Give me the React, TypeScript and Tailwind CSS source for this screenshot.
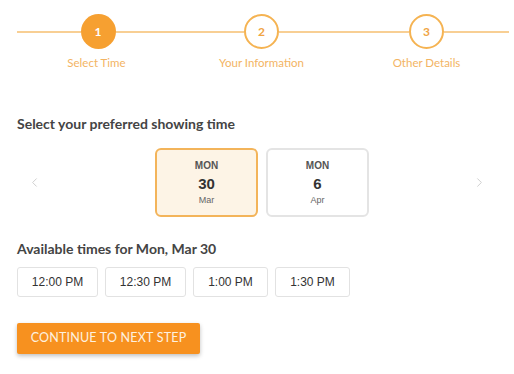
import { ChevronLeft, ChevronRight } from "lucide-react";

const steps = [
  { n: 1, label: "Select Time", active: true },
  { n: 2, label: "Your Information", active: false },
  { n: 3, label: "Other Details", active: false },
];

const days = [
  { dow: "MON", day: "30", month: "Mar", selected: true },
  { dow: "MON", day: "6", month: "Apr", selected: false },
];

const times = ["12:00 PM", "12:30 PM", "1:00 PM", "1:30 PM"];

export default function App() {
  return (
    <div className="w-[514px] h-[374px] bg-white font-['Lato',sans-serif] overflow-hidden">
      {/* Stepper */}
      <div className="grid grid-cols-3 pl-[14px] pr-[5px] pt-[14px]">
        {steps.map((s, i) => (
          <div key={s.n} className="flex flex-col items-center">
            <div className="flex items-center w-full">
              <div className={`flex-1 h-[2px] ${i === 0 ? "ml-[3px]" : ""} bg-[#f8cf94]`} />
              <div
                className={
                  s.active
                    ? "w-[35px] h-[35px] rounded-full bg-[#f6a031] text-white flex items-center justify-center text-[12px] font-bold"
                    : "w-[35px] h-[35px] rounded-full border-2 border-[#f5b352] bg-white text-[#f0a443] flex items-center justify-center text-[12px] font-bold"
                }
              >
                {s.n}
              </div>
              <div className="flex-1 h-[2px] bg-[#f8cf94]" />
            </div>
            <div className="mt-[5px] text-[11.5px] text-[#f3b463]">{s.label}</div>
          </div>
        ))}
      </div>

      {/* Date picker */}
      <div className="px-[17px] mt-[42px]">
        <h2 className="text-[14px] font-bold text-[#444]">Select your preferred showing time</h2>
        <div className="flex items-center mt-[14px]">
          <ChevronLeft className="w-[15px] h-[15px] ml-[10px] text-[#cccccc]" strokeWidth={1.5} />
          <div className="flex gap-[8px] ml-[113px] font-['Liberation_Sans',sans-serif]">
            {days.map((d) => (
              <div
                key={d.day}
                className={
                  d.selected
                    ? "w-[103px] h-[69px] rounded-[6px] border-2 border-[#f3b45a] bg-[#fdf4e6] flex flex-col items-center justify-center"
                    : "w-[103px] h-[69px] rounded-[6px] border-2 border-[#e4e4e4] bg-white flex flex-col items-center justify-center"
                }
              >
                <div className="text-[10px] font-bold text-[#555] leading-[12px]">{d.dow}</div>
                <div className="text-[15px] font-bold text-[#333] leading-[18px] mt-[3px]">{d.day}</div>
                <div className="text-[9px] text-[#666] leading-[11px] mt-[2px]">{d.month}</div>
              </div>
            ))}
          </div>
          <ChevronRight className="w-[15px] h-[15px] ml-auto mr-[10px] text-[#cccccc]" strokeWidth={1.5} />
        </div>

        {/* Times */}
        <h2 className="text-[14px] font-bold text-[#444] mt-[21px]">Available times for Mon, Mar 30</h2>
        <div className="flex gap-[7px] mt-[8px] font-['Liberation_Sans',sans-serif]">
          {times.map((t, i) => (
            <div
              key={t}
              className={`h-[30px] ${i < 2 ? "w-[81px]" : "w-[75px]"} rounded-[3px] border border-[#e2e2e2] flex items-center justify-center text-[12px] text-[#333]`}
            >
              {t}
            </div>
          ))}
        </div>

        <button className="mt-[26px] w-[183px] h-[31px] rounded-[2px] bg-[#f7911f] text-[#fdf1e0] text-[12.5px] tracking-[0.2px] shadow-[0_2px_4px_rgba(0,0,0,0.25)] flex items-center justify-center">
          CONTINUE TO NEXT STEP
        </button>
      </div>
    </div>
  );
}
